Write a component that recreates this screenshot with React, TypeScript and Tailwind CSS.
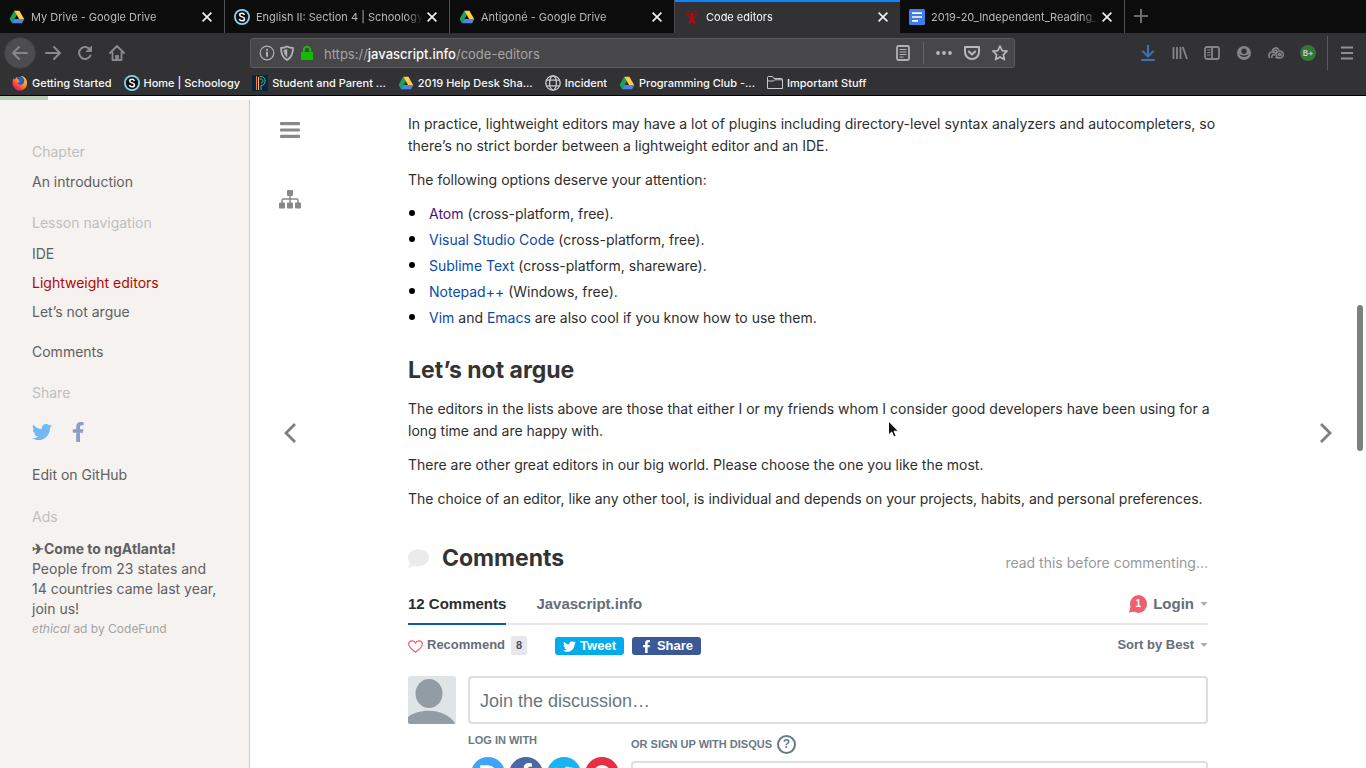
import React from "react";
import { FaTwitter, FaFacebookF, FaComment } from "react-icons/fa";

/* ---------- icons ---------- */

const DriveIcon = () => (
  <svg className="size-4 shrink-0" viewBox="0 0 16 16" aria-hidden="true">
    <path d="M5.2 1.8 0.6 10l2.4 4.2 4.9-8.1z" fill="#1da05a" />
    <path d="M5.2 1.8h5.2l4.9 8.4h-5z" fill="#ffcf45" />
    <path d="M5.4 10.1h10L13 14.2H3z" fill="#4a86e8" />
  </svg>
);

const SchoologyIcon = () => (
  <svg className="size-4 shrink-0" viewBox="0 0 16 16" aria-hidden="true">
    <circle cx="8" cy="8" r="8" fill="#8dd3ef" />
    <circle cx="8" cy="8" r="6.2" fill="#111" />
    <path d="M10.4 5.9C10 4.7 9.1 4.3 8 4.3c-1.300 0-2.300.6-2.300 1.700 0 2.500 4.800 1.300 4.800 3.900 0 1.200-1.100 1.900-2.500 1.900-1.300 0-2.300-.6-2.600-1.800" fill="none" stroke="#fff" strokeWidth="1.500" />
  </svg>
);

const TowerIcon = () => (
  <svg className="size-4 shrink-0" viewBox="0 0 16 16" fill="none" stroke="#c4060c" aria-hidden="true">
    <path d="M7.700 6.500 5.200 15.500M8.300 6.500l2.500 9" strokeWidth="1.300" />
    <path d="M6.800 9.500h2.400M6.500 11l4 3M9.500 11l-4 3" strokeWidth="1" />
    <circle cx="8" cy="5.500" r="1.400" fill="#c4060c" strokeWidth="0.600" />
    <path d="M5.600 3.600 3.600 1.200M10.400 3.600l2-2.400M5.200 5.600H2M10.800 5.600H14M5.400 7.400 3.500 9M10.600 7.400 12.500 9" strokeWidth="0.900" />
  </svg>
);

const DocsIcon = () => (
  <svg className="size-4 shrink-0" viewBox="0 0 16 16" aria-hidden="true">
    <rect width="16" height="16" rx="1.500" fill="#3f7ee8" />
    <path d="M3 4.200h10M3 8h10M3 11.800h6" stroke="#fff" strokeWidth="1.700" />
  </svg>
);

const FirefoxIcon = () => (
  <svg className="size-4 shrink-0" viewBox="0 0 16 16" aria-hidden="true">
    <defs>
      <linearGradient id="fx" x1="1" y1="0" x2="0.200" y2="1">
        <stop offset="0" stopColor="#ffe226" />
        <stop offset="0.450" stopColor="#ff9a1e" />
        <stop offset="0.800" stopColor="#ff2d45" />
        <stop offset="1" stopColor="#e31587" />
      </linearGradient>
    </defs>
    <path d="M1.500 3.500 3 4.500C3.500 3 4.500 2.200 5.500 2l-.3 2L10 1c3 .8 5 3.500 5 7a7.200 7.200 0 0 1-14.400.8C.4 6.500.8 4.800 1.500 3.500z" fill="url(#fx)" />
    <path d="M6.200 2.500C8 .8 11 1.500 12 4c.8 2.200.2 5-2.500 5.800C7.500 10.300 5.500 9 5.600 7.500c1 .3 2-.2 2.400-1C6.500 5.800 5.500 4.500 6.200 2.500z" fill="#2b5ad6" />
  </svg>
);

const PowerSchoolIcon = () => (
  <svg className="size-4 shrink-0" viewBox="0 0 16 16" fill="none" aria-hidden="true">
    <rect width="16" height="16" fill="#06283c" />
    <path d="M4.500 1v14" stroke="#f0754a" />
    <path d="M6.500 15V2" stroke="#f5c04c" />
    <path d="M7.500 1.500h1.500c5.500 0 5.500 9 0 9V15M7.500 4h1.500c2.500 0 2.500 4 0 4" stroke="#69b8a2" strokeWidth="0.900" />
  </svg>
);

const GlobeIcon = () => (
  <svg className="size-4 shrink-0" viewBox="0 0 16 16" fill="none" stroke="#c9c9ca" strokeWidth="1.300" aria-hidden="true">
    <circle cx="8" cy="8" r="7.200" />
    <ellipse cx="8" cy="8" rx="3.400" ry="7.200" />
    <path d="M1.500 5.200h13M1.500 10.800h13" />
  </svg>
);

const FolderIcon = () => (
  <svg className="size-4 shrink-0" viewBox="0 0 16 16" fill="none" stroke="#c9c9ca" aria-hidden="true">
    <path d="M.5 13.500v-11c0-.6.3-1 .9-1h4.200l1.200 2h7.700c.6 0 1 .3 1 .9v9.100zM.5 6h6l1.200-1.200h7.800" />
  </svg>
);

const CloseIcon = () => (
  <svg className="size-[10px]" viewBox="0 0 10 10" stroke="#f4f4f5" strokeWidth="1.600" aria-hidden="true">
    <path d="M.6.6l8.800 8.800M9.400.6.600 9.400" />
  </svg>
);

const Stroke = ({ children, color = "#8a8a8c", width = 2 }: { children: React.ReactNode; color?: string; width?: number }) => (
  <svg className="size-4" viewBox="0 0 16 16" fill="none" stroke={color} strokeWidth={width} strokeLinecap="round" strokeLinejoin="round" aria-hidden="true">
    {children}
  </svg>
);

const Caret = () => (
  <svg className="h-1 w-2" viewBox="0 0 8 4" fill="#a9acb3" aria-hidden="true">
    <path d="M.500 0h7L4 4z" />
  </svg>
);

/* ---------- browser chrome ---------- */

type TabProps = { title: string; icon: React.ReactNode; active?: boolean };

const Tab = ({ title, icon, active }: TabProps) => (
  <div
    className={
      active
        ? "flex w-[225px] items-center border-t-2 border-[#0a84ff] bg-[#323234] pr-3 pb-[2px] pl-[9px] text-[#f9f9fa]"
        : "flex w-[225px] items-center border-r border-[#505052] pr-3 pl-[9px] text-[#b9b9ba]"
    }
  >
    {icon}
    <button className="ml-[6px] flex-1 overflow-hidden mask-r-from-90% text-left text-[11px] leading-4 whitespace-nowrap">{title}</button>
    <button aria-label={"Close " + title} className="ml-1 shrink-0">
      <CloseIcon />
    </button>
  </div>
);

const IconButton = ({ label, className = "w-8", children }: { label: string; className?: string; children: React.ReactNode }) => (
  <button aria-label={label} className={"flex h-8 shrink-0 items-center justify-center " + className}>
    {children}
  </button>
);

const Bookmark = ({ label, icon }: { label: string; icon: React.ReactNode }) => (
  <a href="#" className="flex items-center gap-1 text-[11px] leading-4 font-medium whitespace-nowrap text-[#f9f9fa]">
    {icon}
    {label}
  </a>
);

const BrowserChrome = () => (
  <header className="shrink-0 border-b border-black bg-[#323234]">
    <div className="flex h-[33px] bg-[#0c0c0d]">
      <Tab title="My Drive - Google Drive" icon={<DriveIcon />} />
      <Tab title="English II: Section 4 | Schoology" icon={<SchoologyIcon />} />
      <Tab title="Antigoné - Google Drive" icon={<DriveIcon />} />
      <Tab title="Code editors" icon={<TowerIcon />} active />
      <Tab title="2019-20_Independent_Reading_" icon={<DocsIcon />} />
      <IconButton label="New tab">
        <svg className="size-[14px]" viewBox="0 0 14 14" stroke="#6c6c6e" strokeWidth="2" aria-hidden="true">
          <path d="M7 0v14M0 7h14" />
        </svg>
      </IconButton>
    </div>

    <div className="flex h-10 items-center pl-1">
      <button aria-label="Back" className="flex size-8 items-center justify-center rounded-full border border-[#3e3e40] bg-[#4d4d4f]">
        <Stroke color="#868688"><path d="M15 8H1M7 2 1 8l6 6" /></Stroke>
      </button>
      <div className="ml-px flex">
        <IconButton label="Forward"><Stroke><path d="M1 8h14M9 2l6 6-6 6" /></Stroke></IconButton>
        <IconButton label="Reload">
          <Stroke><path d="M13.500 10.500A6 6 0 1 1 13 4.500" /><path d="M14.500 1.500v5h-5z" fill="#8a8a8c" strokeWidth="1" /></Stroke>
        </IconButton>
        <IconButton label="Home">
          <Stroke><path d="M1 8l7-7 7 7M3.500 7.500V15h9V7.500M7 14.500V11h2v3.500" strokeWidth="1.800" /></Stroke>
        </IconButton>
      </div>

      <div className="ml-[117px] flex h-[30px] min-w-0 flex-1 items-center rounded-[3px] border border-[#5c5c5e] bg-[#474749] px-2">
        <Stroke color="#b1b1b3" width={1.200}><circle cx="8" cy="8" r="6.800" /><path d="M8 7.500V11" strokeWidth="2" /><circle cx="8" cy="4.800" r=".5" /></Stroke>
        <span className="ml-1">
          <Stroke color="#b1b1b3" width={1.800}>
            <path d="M8 1.500C6 2.500 4 3 2 3c0 6 1.500 9.500 6 12 4.500-2.500 6-6 6-12-2 0-4-.5-6-1.500z" />
            <path d="M8 4.500v7.500C6 10.300 5 8.300 4.800 5.300z" fill="#b1b1b3" strokeWidth="0.500" />
          </Stroke>
        </span>
        <svg className="ml-1 size-4" viewBox="0 0 16 16" aria-hidden="true">
          <rect x="2" y="7" width="12" height="8" rx="1" fill="#12bc00" />
          <path d="M4.800 7.500V5a3.200 3.200 0 0 1 6.400 0v2.500" fill="none" stroke="#12bc00" strokeWidth="2" />
        </svg>
        <button className="ml-[9px] flex-1 pt-px text-left text-[13px] leading-5 text-[#a5a5a7]">
          https://<span className="font-medium text-[#f9f9fa]">javascript.info</span>/code-editors
        </button>
        <IconButton label="Reader view">
          <Stroke color="#b1b1b3" width={1.800}><rect x="2" y="1" width="12" height="14" rx="1.500" /><path d="M5 4.500h6M5 7h6M5 9.500h6M5 12h3" strokeWidth="1" /></Stroke>
        </IconButton>
        <span className="ml-1 h-[22px] w-px bg-[#666668]" />
        <IconButton label="Page actions" className="ml-[6px] w-7">
          <svg className="size-4" viewBox="0 0 16 16" fill="#b9b9bb" aria-hidden="true">
            <circle cx="2" cy="8" r="1.900" /><circle cx="8" cy="8" r="1.900" /><circle cx="14" cy="8" r="1.900" />
          </svg>
        </IconButton>
        <IconButton label="Save to Pocket" className="w-7">
          <Stroke color="#b9b9bb"><path d="M1 2h14v5a7 7 0 0 1-14 0z" /><path d="M4.800 6.500 8 9.500l3.200-3" /></Stroke>
        </IconButton>
        <IconButton label="Bookmark this page" className="-mr-2 w-7">
          <Stroke color="#b9b9bb" width={1.700}><path d="M8 1l2.100 4.600 5 .6-3.700 3.400 1 5L8 12.100l-4.400 2.500 1-5L.9 6.200l5-.6z" /></Stroke>
        </IconButton>
      </div>

      <div className="ml-[117px] flex items-center">
        <IconButton label="Downloads"><Stroke color="#3a74b4"><path d="M8 .5v10.500M3 6.500l5 5 5-5M2 15h12" /></Stroke></IconButton>
        <IconButton label="Library"><Stroke color="#858587" width={1.800}><path d="M1.500 2v12M5 2v12M8.500 2v12M10.800 2 15 14" strokeLinecap="butt" /></Stroke></IconButton>
        <IconButton label="Sidebars"><Stroke color="#858587" width={1.800}><rect x="1" y="2" width="14" height="12" rx="2" /><path d="M8 2v12" /><path d="M3.500 5H6M3.500 7.500H6M3.500 10H6" strokeWidth="1" /></Stroke></IconButton>
        <IconButton label="Account">
          <svg className="size-4" viewBox="0 0 16 16" aria-hidden="true">
            <circle cx="8" cy="8" r="7" fill="#858587" />
            <circle cx="8" cy="6.200" r="2.700" fill="#323234" />
            <path d="M3.300 8.800C4 13 12 13 12.700 8.800 11 11 5 11 3.300 8.800z" fill="#323234" />
          </svg>
        </IconButton>
        <IconButton label="Extension">
          <Stroke color="#858587" width={1.600}>
            <path d="M1.500 12.500C-.5 9 3 6 5 7.500M4 12.500c-.6-1.800.8-3.500 2.800-2.500M4.500 5.500C5 2.500 9 2 10.500 4.500" />
            <circle cx="7.200" cy="6.500" r="1.500" /><circle cx="11.800" cy="9.500" r="3.500" /><circle cx="11.800" cy="9.500" r="1.200" /><path d="M8 12.500l2 .5" />
          </Stroke>
        </IconButton>
        <IconButton label="Grades extension">
          <span className="flex size-4 items-center justify-center rounded-full bg-[#34753a] text-[8px] font-bold text-[#c2c8c2]">B+</span>
        </IconButton>
        <span className="ml-[3px] h-[34px] w-px bg-[#5a5a5c]" />
        <IconButton label="Open menu" className="w-[38px]">
          <Stroke color="#909092"><path d="M2 2.500h12M2 8h12M2 13.500h12" strokeLinecap="butt" /></Stroke>
        </IconButton>
      </div>
    </div>

    <nav aria-label="Bookmarks" className="flex h-[22px] items-center gap-3 px-3 pb-[2px]">
      <Bookmark label="Getting Started" icon={<FirefoxIcon />} />
      <Bookmark label="Home | Schoology" icon={<SchoologyIcon />} />
      <Bookmark label="Student and Parent ..." icon={<PowerSchoolIcon />} />
      <Bookmark label="2019 Help Desk Sha..." icon={<DriveIcon />} />
      <Bookmark label="Incident" icon={<GlobeIcon />} />
      <Bookmark label="Programming Club -..." icon={<DriveIcon />} />
      <Bookmark label="Important Stuff" icon={<FolderIcon />} />
    </nav>
  </header>
);

/* ---------- page ---------- */

const SideTitle = ({ children }: { children: React.ReactNode }) => <h4 className="text-[#c0bfbe]">{children}</h4>;

const Sidebar = () => (
  <aside className="w-[250px] shrink-0 border-r border-[#d0cdc9] bg-[#f5f2f0] px-8 pt-[42px] text-[14px] leading-5 text-[#616060]">
    <SideTitle>Chapter</SideTitle>
    <a href="#" className="mt-[10px] block">An introduction</a>
    <div className="mt-[21px]"><SideTitle>Lesson navigation</SideTitle></div>
    <nav className="mt-[11px] flex flex-col gap-[9px]">
      <a href="#">IDE</a>
      <a href="#" className="text-[#b20600]">Lightweight editors</a>
      <a href="#">Let’s not argue</a>
    </nav>
    <a href="#" className="mt-5 block">Comments</a>
    <div className="mt-[21px]"><SideTitle>Share</SideTitle></div>
    <div className="mt-[19px] flex h-5 items-center gap-5">
      <a href="#" aria-label="Share on Twitter"><FaTwitter size={20} color="#72b9f3" /></a>
      <a href="#" aria-label="Share on Facebook">
        <svg className="h-5 w-3" viewBox="0 0 12 20" fill="#8b9dc9" aria-hidden="true">
          <path d="M11.600.2v3.100H9.800C8.400 3.300 8 4 8 5v2.200h3.400L11 10.700H8V20H4.200v-9.300H.8V7.200h3.400V4.500C4.200 1.600 6 0 8.800 0c1.200 0 2.400.1 2.800.2z" />
        </svg>
      </a>
    </div>
    <a href="#" className="mt-[23px] block">Edit on GitHub</a>
    <div className="mt-[22px]"><SideTitle>Ads</SideTitle></div>
    <div className="mt-3">
      <a href="#" className="block whitespace-nowrap">
        <strong className="font-bold">✈Come to ngAtlanta!</strong>
        <br />People from 23 states and
        <br />14 countries came last year,
        <br />join us!
      </a>
      <a href="#" className="block text-[12px] text-[#a5a3a1]"><em>ethical</em> ad by CodeFund</a>
    </div>
  </aside>
);

const Chevron = ({ d }: { d: string }) => (
  <svg className="h-5 w-3" viewBox="0 0 12 20" fill="none" stroke="#7e7e7e" strokeWidth="2.800" aria-hidden="true">
    <path d={d} />
  </svg>
);

const LeftRail = () => (
  <div className="grid w-20 shrink-0 grid-rows-[1fr_auto_1fr] justify-items-center pb-[2px]">
    <div className="flex flex-col">
      <button aria-label="Toggle sidebar" className="flex h-[60px] items-center justify-center">
        <svg className="h-4 w-5" viewBox="0 0 20 16" fill="#888" aria-hidden="true">
          <rect width="20" height="3.200" rx="1" /><rect y="6.400" width="20" height="3.200" rx="1" /><rect y="12.800" width="20" height="3.200" rx="1" />
        </svg>
      </button>
      <a href="#" aria-label="Tutorial map" className="flex h-20 items-center justify-center">
        <svg className="h-5 w-[22px]" viewBox="0 0 22 20" fill="#888" aria-hidden="true">
          <rect x="8" y="0" width="6" height="6" rx="1" />
          <rect x="0" y="12.500" width="6" height="6" rx="1" /><rect x="8" y="12.500" width="6" height="6" rx="1" /><rect x="16" y="12.500" width="6" height="6" rx="1" />
          <path d="M11 6v7M3 13v-2.500q0-1.500 1.500-1.500h13q1.500 0 1.500 1.500V13" fill="none" stroke="#888" strokeWidth="1.500" />
        </svg>
      </a>
    </div>
    <a href="#" aria-label="Previous lesson" className="p-1"><Chevron d="M11 1 2 10l9 9" /></a>
  </div>
);

const Link = ({ children }: { children: React.ReactNode }) => <a href="#" className="text-[#0a4aa8]">{children}</a>;

const Item = ({ children }: { children: React.ReactNode }) => (
  <li className="flex items-center gap-[14px]">
    <span className="mb-[2px] ml-px size-[6px] rounded-full bg-black" />
    <span>{children}</span>
  </li>
);

const Social = ({ label, className, children }: { label: string; className: string; children: React.ReactNode }) => (
  <button aria-label={label} className={"flex size-[34px] items-center justify-center rounded-full text-white " + className}>
    {children}
  </button>
);

const Disqus = () => (
  <section aria-label="Discussion" className="font-['Liberation_Sans',sans-serif] font-bold text-[#656c7a]">
    <div className="flex h-[41px] border-b-2 border-[#e7e8ed] text-[15px] leading-5">
      <button className="-mb-[2px] border-b-2 border-[#0a59b0] text-[#2a2e2e]">12 Comments</button>
      <button className="ml-[30px]">Javascript.info</button>
      <button className="ml-auto flex items-center gap-[6px]">
        <span className="relative flex size-[18px] items-center justify-center">
          <svg className="absolute inset-0 size-[18px]" viewBox="0 0 18 18" fill="#f05f70" aria-hidden="true">
            <ellipse cx="9.500" cy="9" rx="8.500" ry="9" />
            <path d="M1.500 11.500 0 17.500l6-1z" />
          </svg>
          <span className="relative text-[10px] text-white">1</span>
        </span>
        Login
        <Caret />
      </button>
    </div>
    <div className="flex h-[51px] items-start pt-[10px] text-[13px] leading-5">
      <button className="flex items-center gap-1">
        <svg className="mt-[2px] h-[13px] w-[15px]" viewBox="0 0 15 13" fill="none" stroke="#f05f70" strokeWidth="1.200" aria-hidden="true">
          <path d="M7.500 12.200C3.500 9.200.700 6.700.700 4.200.700.600 5.800-.600 7.500 3 9.200-.600 14.300.600 14.300 4.200c0 2.500-2.800 5-6.800 8z" />
        </svg>
        Recommend
        <span className="ml-[2px] w-4 rounded-[2px] bg-[#e7e8ed] text-center text-[11px] leading-[19px] text-[#4b5160]">8</span>
      </button>
      <button className="mt-[2px] ml-7 flex h-[18px] w-[69px] items-center justify-center gap-1 rounded-[3px] bg-[#00aced] text-white">
        <FaTwitter size={13} />
        Tweet
      </button>
      <button className="mt-[2px] ml-2 flex h-[18px] w-[69px] items-center justify-center gap-1 rounded-[3px] bg-[#3b5998] text-white">
        <FaFacebookF size={13} />
        Share
      </button>
      <button className="ml-auto flex items-center gap-[6px]">
        Sort by Best
        <Caret />
      </button>
    </div>
    <div className="flex gap-3">
      <svg className="size-12 shrink-0 rounded-[2px]" viewBox="0 0 48 48" role="img" aria-label="Avatar">
        <rect width="48" height="48" fill="#dfe4e7" />
        <ellipse cx="21" cy="17.500" rx="13.500" ry="14.500" fill="#919ca5" />
        <path d="M0 48v-7C12 31.500 38 32 47.500 48z" fill="#919ca5" />
      </svg>
      <textarea
        aria-label="Join the discussion"
        rows={1}
        placeholder="Join the discussion…"
        className="h-12 min-w-0 flex-1 resize-none overflow-hidden rounded-[4px] border-2 border-[#dbdfe4] px-[10px] py-[11px] text-[18px] leading-6 font-normal placeholder:text-[#697782]"
      />
    </div>
    <div className="ml-[60px] flex pt-[10px] text-[11px] leading-3 text-[#687a86]">
      <div className="w-[163px] shrink-0">
        <h6>LOG IN WITH</h6>
        <div className="mt-[11px] ml-[3px] flex gap-1">
          <Social label="Disqus" className="bg-[#3da5fb]">
            <svg className="size-[22px]" viewBox="0 0 22 22" fill="none" stroke="#fff" strokeWidth="3.500" aria-hidden="true"><path d="M5 4h6c9 0 9 14 0 14H5z" /></svg>
          </Social>
          <Social label="Facebook" className="bg-[#4b67a6]"><FaFacebookF size={22} /></Social>
          <Social label="Twitter" className="bg-[#1ab2f0]"><FaTwitter size={18} /></Social>
          <Social label="Google" className="bg-[#e53042]">
            <svg className="size-[22px]" viewBox="0 0 22 22" fill="none" stroke="#fff" strokeWidth="3" aria-hidden="true"><path d="M17 6.500A7.500 7.500 0 1 0 18.500 12H11" /></svg>
          </Social>
        </div>
      </div>
      <div className="flex-1">
        <label htmlFor="disqus-name" className="flex h-5 items-center gap-[5px]">
          OR SIGN UP WITH DISQUS
          <span className="flex size-[19px] items-center justify-center rounded-full border-2 border-[#687a86] text-[12px]">?</span>
        </label>
        <input id="disqus-name" type="text" className="mt-[7px] block h-10 w-full rounded-[4px] border-2 border-[#dbdfe4] px-2" />
      </div>
    </div>
  </section>
);

const Article = () => (
  <main className="min-w-0 max-w-[800px] flex-1 pt-[13px] text-[14px] leading-[22px] text-[#2e2e2e]">
    <div className="flex flex-col gap-3 whitespace-nowrap">
      <p>
        In practice, lightweight editors may have a lot of plugins including directory-level syntax analyzers and autocompleters, so
        <br />there’s no strict border between a lightweight editor and an IDE.
      </p>
      <p>The following options deserve your attention:</p>
      <ul className="flex flex-col gap-1">
        <Item><a href="#" className="text-[#4a1180]">Atom</a> (cross-platform, free).</Item>
        <Item><Link>Visual Studio Code</Link> (cross-platform, free).</Item>
        <Item><Link>Sublime Text</Link> (cross-platform, shareware).</Item>
        <Item><Link>Notepad++</Link> (Windows, free).</Item>
        <Item><Link>Vim</Link> and <Link>Emacs</Link> are also cool if you know how to use them.</Item>
      </ul>
    </div>
    <h2 className="mt-[25px] text-[23px] leading-8 font-bold text-[#333]">Let’s not argue</h2>
    <div className="mt-3 flex flex-col gap-3 whitespace-nowrap">
      <p>
        The editors in the lists above are those that either I or my friends whom I consider good developers have been using for a
        <br />long time and are happy with.
      </p>
      <p>There are other great editors in our big world. Please choose the one you like the most.</p>
      <p>The choice of an editor, like any other tool, is individual and depends on your projects, habits, and personal preferences.</p>
    </div>
    <div className="mt-8 mb-[10px] flex items-center">
      <FaComment size={21} color="#ebebeb" />
      <h2 className="ml-[13px] text-[23px] leading-8 font-bold text-[#333]">Comments</h2>
      <a href="#" className="mt-[10px] ml-auto text-[#999]">read this before commenting…</a>
    </div>
    <Disqus />
  </main>
);

export default function App() {
  return (
    <div className="relative flex h-screen flex-col overflow-hidden bg-white font-['Inter',sans-serif]">
      <BrowserChrome />
      <div className="h-1 shrink-0">
        <div className="h-full w-12 bg-[#b9cfb3]" />
      </div>
      <div className="flex min-h-0 flex-1">
        <Sidebar />
        <LeftRail />
        <div className="flex min-w-0 flex-1 justify-center">
          <Article />
        </div>
        <div className="flex w-20 shrink-0 items-center justify-center pb-[2px]">
          <a href="#" aria-label="Next lesson" className="p-1"><Chevron d="M1 1l9 9-9 9" /></a>
        </div>
      </div>
      <div className="absolute top-[305px] right-[3px] h-[146px] w-[6px] rounded-full bg-[#7f7f7f]" />
      <svg className="absolute top-[420px] left-[887px] h-[18px] w-[13px]" viewBox="0 0 13 18" aria-hidden="true">
        <path d="M1.500 1v14l3.200-3 2.200 5 2.300-1-2.200-4.800h4.500z" fill="#111" stroke="#fff" />
      </svg>
    </div>
  );
}
